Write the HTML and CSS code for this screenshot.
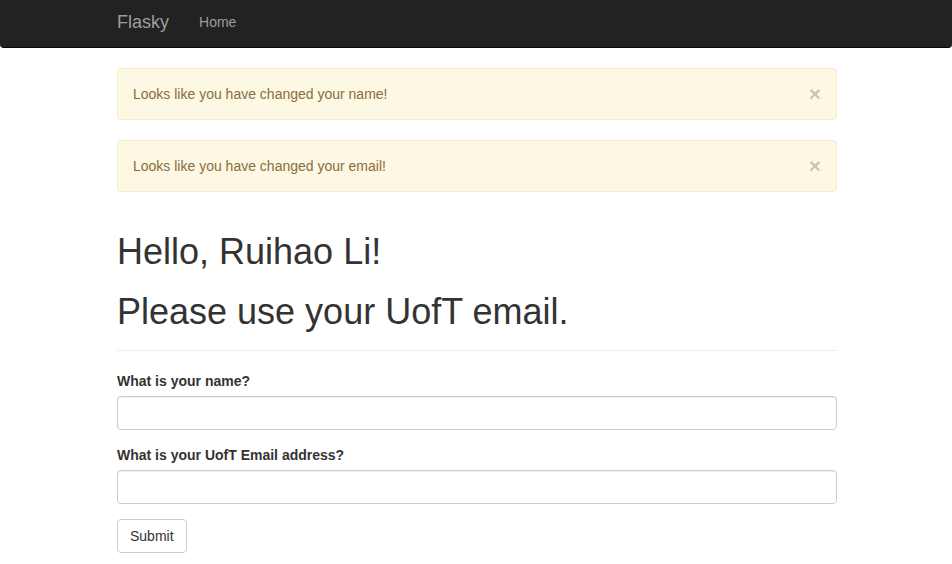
FILE: index.html
```html
<!DOCTYPE html>
<html lang="en">
<head>
<meta charset="utf-8">
<title>Flasky</title>
<link rel="stylesheet" href="styles.css">
</head>
<body>
<div class="navbar">
  <div class="container nav-container">
    <a class="brand" href="#">Flasky</a>
    <ul class="nav">
      <li><a href="#">Home</a></li>
    </ul>
  </div>
</div>
<div class="container">
  <div class="alert">
    <button type="button" class="close">&times;</button>
    Looks like you have changed your name!
  </div>
  <div class="alert">
    <button type="button" class="close">&times;</button>
    Looks like you have changed your email!
  </div>
  <div class="page-header">
    <h1>Hello, Ruihao Li!</h1>
    <h1>Please use your UofT email.</h1>
  </div>
  <form class="form">
    <div class="form-group">
      <label class="label" for="name">What is your name?</label>
      <input class="form-control" id="name" type="text">
    </div>
    <div class="form-group">
      <label class="label" for="email">What is your UofT Email address?</label>
      <input class="form-control" id="email" type="text">
    </div>
    <button type="button" class="btn">Submit</button>
  </form>
</div>
</body>
</html>
```

FILE: styles.css
```css
* { box-sizing: border-box; }
html, body { margin: 0; padding: 0; }
body {
  font-family: "Liberation Sans", Arial, Helvetica, sans-serif;
  font-size: 14px;
  line-height: 20px;
  color: #333;
  background: #fff;
}
.container {
  width: 750px;
  margin: 0 auto 0 calc(50% - 374px);
  padding: 0 15px;
}
.navbar {
  background: #222;
  border-bottom: 1px solid #080808;
  border-radius: 0 0 4px 4px;
  margin-bottom: 20px;
}
.nav-container {
  display: flex;
  align-items: flex-start;
}
.brand {
  display: block;
  margin-left: -15px;
  padding: 12px 15px 15px;
  font-size: 18px;
  line-height: 20px;
  color: #9d9d9d;
  text-decoration: none;
}
.nav {
  list-style: none;
  margin: 0;
  padding: 0;
  display: flex;
}
.nav a {
  display: block;
  padding: 12px 15px 15px;
  line-height: 20px;
  color: #9d9d9d;
  text-decoration: none;
}
.alert {
  padding: 15px 35px 15px 15px;
  margin-bottom: 20px;
  border: 1px solid #faebcc;
  border-radius: 4px;
  background: #fcf8e3;
  color: #8a6d3b;
}
.close {
  float: right;
  position: relative;
  top: -1px;
  right: -20px;
  padding: 0;
  border: 0;
  background: transparent;
  font-family: inherit;
  font-size: 21px;
  font-weight: 700;
  line-height: 1;
  color: #000;
  opacity: 0.2;
  text-shadow: 0 1px 0 #fff;
  cursor: pointer;
}
.page-header {
  margin: 40px 0 20px;
  padding-bottom: 9px;
  border-bottom: 1px solid #eee;
}
h1 {
  font-size: 36px;
  font-weight: 500;
  line-height: 1.1;
  margin: 20px 0 10px;
}
.page-header h1:first-child { margin-top: 0; }
.form-group { margin-bottom: 15px; }
.label {
  display: inline-block;
  margin-bottom: 5px;
  font-weight: 700;
}
.form-control {
  display: block;
  width: 100%;
  height: 34px;
  padding: 6px 12px;
  font-family: inherit;
  font-size: 14px;
  color: #555;
  background: #fff;
  border: 1px solid #ccc;
  border-radius: 4px;
  box-shadow: inset 0 1px 1px rgba(0,0,0,.075);
}
.btn {
  display: inline-block;
  padding: 6px 12px;
  font-family: inherit;
  font-size: 14px;
  line-height: 20px;
  color: #333;
  background: #fff;
  border: 1px solid #ccc;
  border-radius: 4px;
  cursor: pointer;
}
```
